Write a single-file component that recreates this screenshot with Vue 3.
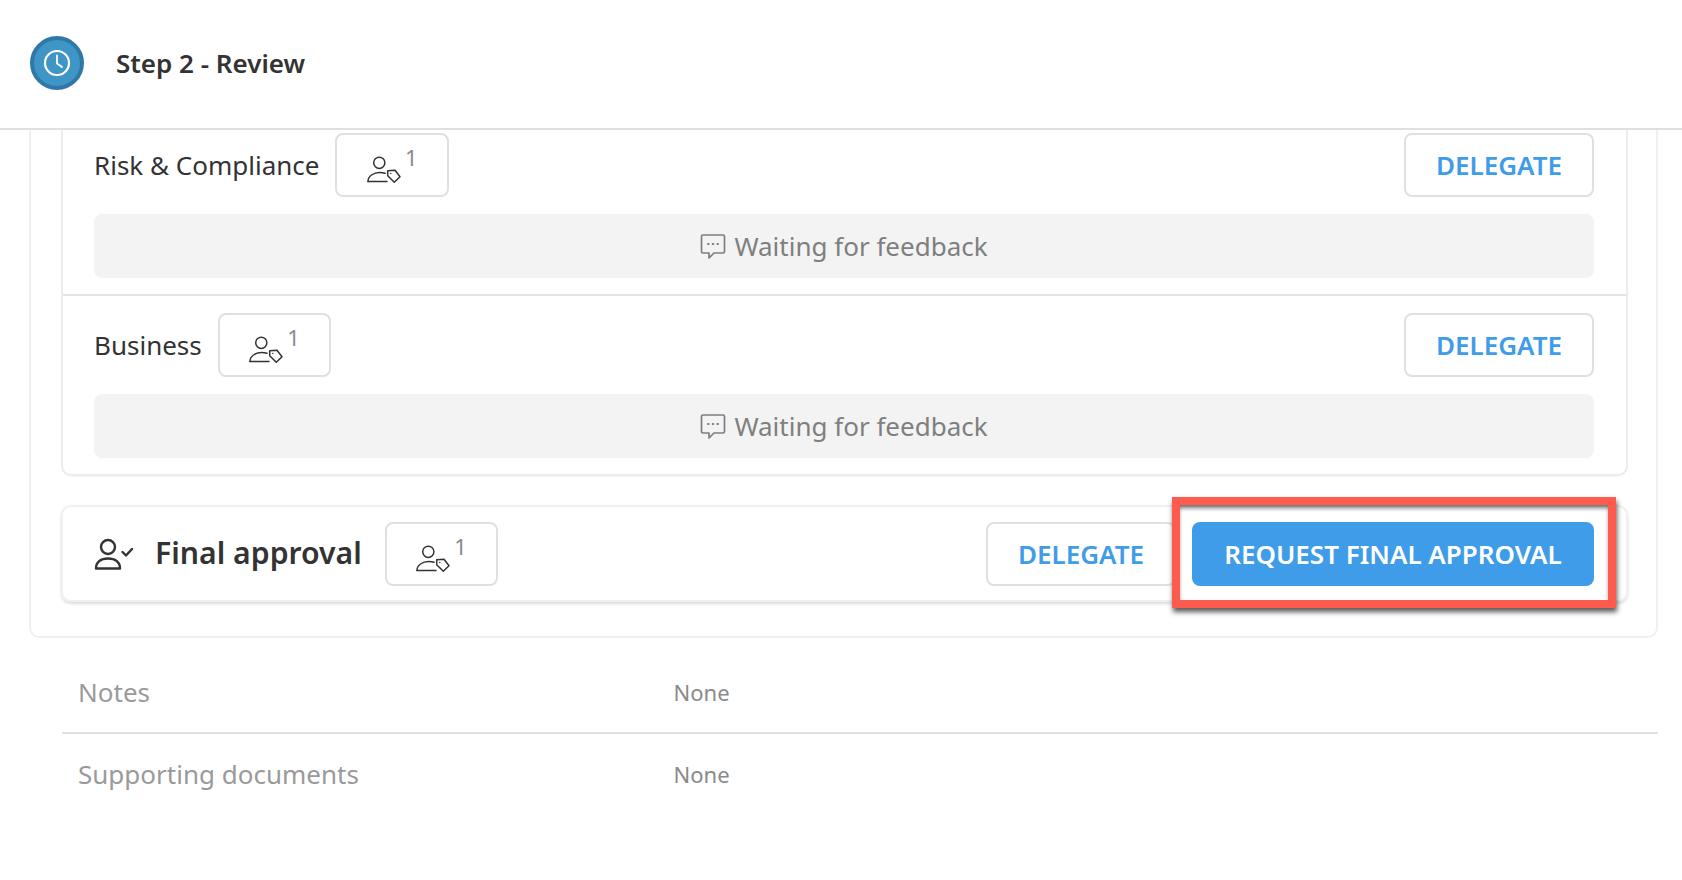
<script setup>
const approvers = [
  { id: 1, name: 'Risk & Compliance' },
  { id: 2, name: 'Business' },
]
const details = [
  { label: 'Notes', value: 'None' },
  { label: 'Supporting documents', value: 'None' },
]
</script>

<template>
  <div class="page">
    <header class="head">
      <div class="avatar">
        <svg width="32" height="32" viewBox="0 0 32 32" fill="none" stroke="#fff" stroke-width="2.2" stroke-linecap="round" stroke-linejoin="round">
          <circle cx="16" cy="16" r="12" />
          <path d="M16 8.5V16.5L21 20" stroke-width="1.8" />
        </svg>
      </div>
      <h1 class="title">Step 2 - Review</h1>
    </header>

    <div class="body">
      <section class="outer">
        <div class="group">
          <div v-for="a in approvers" :key="a.id" class="row">
            <div class="line">
              <span class="name">{{ a.name }}</span>
              <button class="chip">
                <svg class="tagged" width="34" height="30" viewBox="0 0 34 30" fill="none" stroke="#333" stroke-width="1.5" stroke-linecap="round" stroke-linejoin="round">
                  <circle cx="12.3" cy="7.8" r="5.6" />
                  <path d="M1 26.5C1 24.5 1.5 22 4.5 20C6.5 18.6 9.5 17.5 12.5 17.5C14.5 17.5 16.5 17.8 18 18.3" />
                  <path d="M1 26.5H20" />
                  <path d="M20.7 15.7L28 15.2L33 21.7L27.3 27.3L20.7 20.7Z" />
                  <circle cx="23.6" cy="18.4" r=".3" stroke-width=".8" />
                </svg>
                <sup class="count">1</sup>
              </button>
              <button class="btn ghost">DELEGATE</button>
            </div>
            <div class="wait">
              <svg width="26" height="27" viewBox="0 0 26 27" fill="none" stroke="#7f7f7f" stroke-width="1.7" stroke-linejoin="round">
                <path d="M3 2H23A1.5 1.5 0 0 1 24.5 3.5V18.5A1.5 1.5 0 0 1 23 20H14L9 25V20H3A1.5 1.5 0 0 1 1.5 18.5V3.5A1.5 1.5 0 0 1 3 2Z" />
                <path d="M8 11H8.6M12.7 11H13.3M17.4 11H18" stroke-width="2" stroke-linecap="round" />
              </svg>
              <span>Waiting for feedback</span>
            </div>
          </div>
        </div>

        <div class="final">
          <svg class="check" width="40" height="34" viewBox="0 0 40 34" fill="none" stroke="#333" stroke-width="2.4" stroke-linecap="round" stroke-linejoin="round">
            <circle cx="14" cy="10" r="7" />
            <path d="M2 31.5C2 25 7 21.5 14 21.5C21 21.5 26 25 26 31.5Z" />
            <path d="M28.5 15L32 18.5L38 12" />
          </svg>
          <span class="final-name">Final approval</span>
          <button class="chip">
            <svg class="tagged" width="34" height="30" viewBox="0 0 34 30" fill="none" stroke="#333" stroke-width="1.5" stroke-linecap="round" stroke-linejoin="round">
              <circle cx="12.3" cy="7.8" r="5.6" />
              <path d="M1 26.5C1 24.5 1.5 22 4.5 20C6.5 18.6 9.5 17.5 12.5 17.5C14.5 17.5 16.5 17.8 18 18.3" />
              <path d="M1 26.5H20" />
              <path d="M20.7 15.7L28 15.2L33 21.7L27.3 27.3L20.7 20.7Z" />
              <circle cx="23.6" cy="18.4" r=".3" stroke-width=".8" />
            </svg>
            <sup class="count">1</sup>
          </button>
          <button class="btn ghost">DELEGATE</button>
          <button class="btn solid">REQUEST FINAL APPROVAL</button>
          <div class="highlight"></div>
        </div>
      </section>

      <dl class="details">
        <div v-for="d in details" :key="d.label" class="detail">
          <dt>{{ d.label }}</dt>
          <dd>{{ d.value }}</dd>
        </div>
      </dl>
    </div>
  </div>
</template>

<style>
html, body { margin: 0; background: #fff; }
</style>

<style scoped>
.page {
  width: 1682px;
  height: 880px;
  overflow: hidden;
  font-family: "Noto Sans", "Open Sans", sans-serif;
  color: #333;
  background: #fff;
}
.head {
  box-sizing: border-box;
  height: 130px;
  border-bottom: 2px solid #e0e0e0;
  display: flex;
  align-items: center;
  padding: 0 0 2px 30px;
}
.avatar {
  width: 54px;
  height: 54px;
  box-sizing: border-box;
  border-radius: 50%;
  background: #3e95c6;
  border: 4px solid #2f78a8;
  display: flex;
  align-items: center;
  justify-content: center;
}
.title {
  margin: 0 0 0 32px;
  font-size: 26px;
  font-weight: 600;
  line-height: 36px;
  color: #333;
}
.body { padding-left: 29px; }
.outer {
  width: 1629px;
  box-sizing: border-box;
  height: 508px;
  border: 2px solid #f0f0f0;
  border-top: 0;
  border-radius: 0 0 10px 10px;
  padding: 0 28px 0 30px;
}
.group {
  border: 2px solid #ececec;
  border-top: 0;
  border-radius: 0 0 10px 10px;
  box-shadow: 0 1px 1px rgba(0, 0, 0, .04);
}
.row {
  padding: 3px 32px 16px 31px;
  border-bottom: 2px solid #e4e4e4;
}
.row + .row { padding-top: 17px; }
.row:last-child { border-bottom: 0; padding-bottom: 16px; }
.line {
  display: flex;
  align-items: center;
  gap: 16px;
}
.name {
  font-size: 26px;
  line-height: 36px;
}
.chip {
  width: 113.5px;
  height: 64px;
  box-sizing: border-box;
  background: #fff;
  border: 2px solid #e0e0e0;
  border-radius: 8px;
  display: flex;
  align-items: center;
  justify-content: center;
  padding: 0;
  font-family: inherit;
}
.tagged { margin: 10px 0 0 0; }
.count {
  font-size: 22px;
  line-height: 22px;
  color: #8a8a8a;
  margin: -16px 0 0 4px;
  vertical-align: baseline;
}
.btn {
  height: 64px;
  box-sizing: border-box;
  border-radius: 8px;
  font-family: inherit;
  font-size: 26px;
  font-weight: 600;
  padding: 0;
}
.ghost {
  width: 190px;
  margin-left: auto;
  background: #fff;
  border: 2px solid #e0e0e0;
  color: #3f9ce8;
}
.solid {
  width: 402px;
  background: #3f9ce8;
  border: 0;
  color: #fff;
}
.wait {
  margin-top: 17px;
  height: 64px;
  background: #f3f3f3;
  border-radius: 8px;
  display: flex;
  align-items: center;
  justify-content: center;
  gap: 8px;
  font-size: 26px;
  color: #7f7f7f;
}
.final {
  position: relative;
  margin-top: 29px;
  height: 97px;
  box-sizing: border-box;
  border: 2px solid #f0f0f0;
  border-radius: 10px;
  box-shadow: 0 2px 3px rgba(0, 0, 0, .14);
  display: flex;
  align-items: center;
  padding: 0 32px 0 31px;
  gap: 16px;
}
.check { margin-right: 5px; }
.final-name {
  font-size: 30.2px;
  font-weight: 600;
  margin: 0 7px 2px 0;
}
.highlight {
  position: absolute;
  left: 1109px;
  top: -10px;
  width: 444px;
  height: 111px;
  box-sizing: border-box;
  border: 8px solid #fe5a4d;
  box-shadow: 1px 4px 5px rgba(0, 0, 0, .65), inset 0 4px 4px -1px rgba(0, 0, 0, .55);
  pointer-events: none;
}
.details {
  margin: 0 0 0 33px;
  width: 1596px;
}
.detail {
  display: flex;
  align-items: center;
  height: 80px;
  padding-left: 16px;
  box-sizing: border-box;
}
.detail:first-child {
  height: 82px;
  margin-top: 14px;
  border-bottom: 2px solid #e0e0e0;
}
dt {
  width: 595.5px;
  font-size: 26px;
  color: #9a9a9a;
}
dd {
  margin: 0;
  font-size: 22px;
  color: #8a8a8a;
}
</style>
